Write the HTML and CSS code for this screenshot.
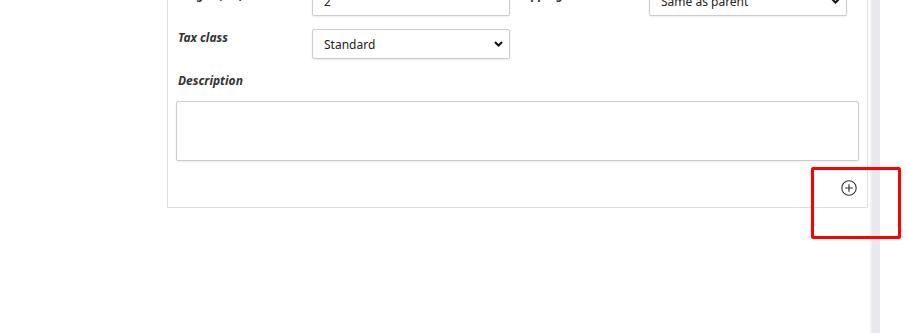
FILE: index.html
```html
<!DOCTYPE html>
<html lang="en">

<head>
    <meta charset="UTF-8">
    <title>Product variant</title>
    <link rel="stylesheet" href="styles.css">
</head>

<body>
    <div id="page">
        <div id="panel">
            <div class="grid">
                <label class="label">Height (cm)</label>
                <input class="field" type="text" value="2">
                <label class="label second">Shipping class</label>
                <div class="select-wrap">
                    <select class="field select">
                        <option>Same as parent</option>
                    </select>
                    <svg class="chevron" width="9" height="6" viewBox="0 0 9 6"><path d="M1 1l3.5 3.5L8 1" fill="none" stroke="#111" stroke-width="2"/></svg>
                </div>

                <label class="label">Tax class</label>
                <div class="select-wrap">
                    <select class="field select">
                        <option>Standard</option>
                    </select>
                    <svg class="chevron" width="9" height="6" viewBox="0 0 9 6"><path d="M1 1l3.5 3.5L8 1" fill="none" stroke="#111" stroke-width="2"/></svg>
                </div>
            </div>

            <div class="desc">
                <label class="label">Description</label>
                <textarea class="area"></textarea>
            </div>

            <div class="actions">
                <button class="add" title="Add">
                    <svg width="16" height="16" viewBox="0 0 16 16">
                        <circle cx="8" cy="8" r="7.2" fill="none" stroke="#333" stroke-width="1.1"/>
                        <path d="M8 4.2v7.6M4.2 8h7.6" stroke="#333" stroke-width="1.2"/>
                    </svg>
                </button>
            </div>
        </div>
        <div id="track"></div>
    </div>
    <div class="highlight"></div>
</body>

</html>
```

FILE: styles.css
```css
body {
    margin: 0;
    background: #fff;
    font-family: "Noto Sans", "Open Sans", sans-serif;
    color: #222;
    height: 333px;
    overflow: hidden;
    position: relative;
}

#page {
    display: flex;
    align-items: flex-start;
    padding-left: 167px;
    height: 333px;
}

#panel {
    width: 683px;
    margin-top: -22px;
    padding: 8px 8px 11px 8px;
    border: 1px solid #dedede;
    border-top: none;
}

#track {
    width: 8px;
    height: 333px;
    margin-left: 2px;
    border-left: 2px solid #f1f1f4;
    background: #e8e8ee;
}

.grid {
    display: grid;
    grid-template-columns: 136px 198px 139px 198px;
    row-gap: 13px;
}

.label {
    display: block;
    padding: 1px 0 0 2px;
    font-size: 12px;
    line-height: 16px;
    font-weight: 700;
    font-style: italic;
    color: #333;
}

.second {
    padding-left: 4px;
}

.field {
    box-sizing: border-box;
    width: 198px;
    height: 30px;
    margin: 0;
    padding: 0 11px;
    border: 1px solid #ccc;
    border-radius: 2px;
    box-shadow: 0 1px 2px rgba(0, 0, 0, 0.08);
    background: #fff;
    font-family: inherit;
    font-size: 12px;
    color: #222;
    outline: none;
}

.select-wrap {
    position: relative;
}

.select {
    appearance: none;
    -webkit-appearance: none;
}

.chevron {
    position: absolute;
    right: 7px;
    top: 12px;
    pointer-events: none;
}

.desc {
    margin-top: 14px;
}

.desc .label {
    padding-top: 0;
}

.area {
    display: block;
    box-sizing: border-box;
    width: 683px;
    height: 60px;
    margin-top: 12px;
    border: 1px solid #ccc;
    border-radius: 2px;
    box-shadow: 0 1px 2px rgba(0, 0, 0, 0.08);
    resize: none;
    outline: none;
}

.actions {
    display: flex;
    justify-content: flex-end;
    margin-top: 19px;
    padding-right: 2px;
}

.add {
    display: flex;
    padding: 0;
    border: none;
    background: none;
    cursor: pointer;
}

.highlight {
    position: absolute;
    left: 811px;
    top: 167px;
    width: 84px;
    height: 66px;
    border: 3px solid #ff0000;
    border-radius: 2px;
}
```
